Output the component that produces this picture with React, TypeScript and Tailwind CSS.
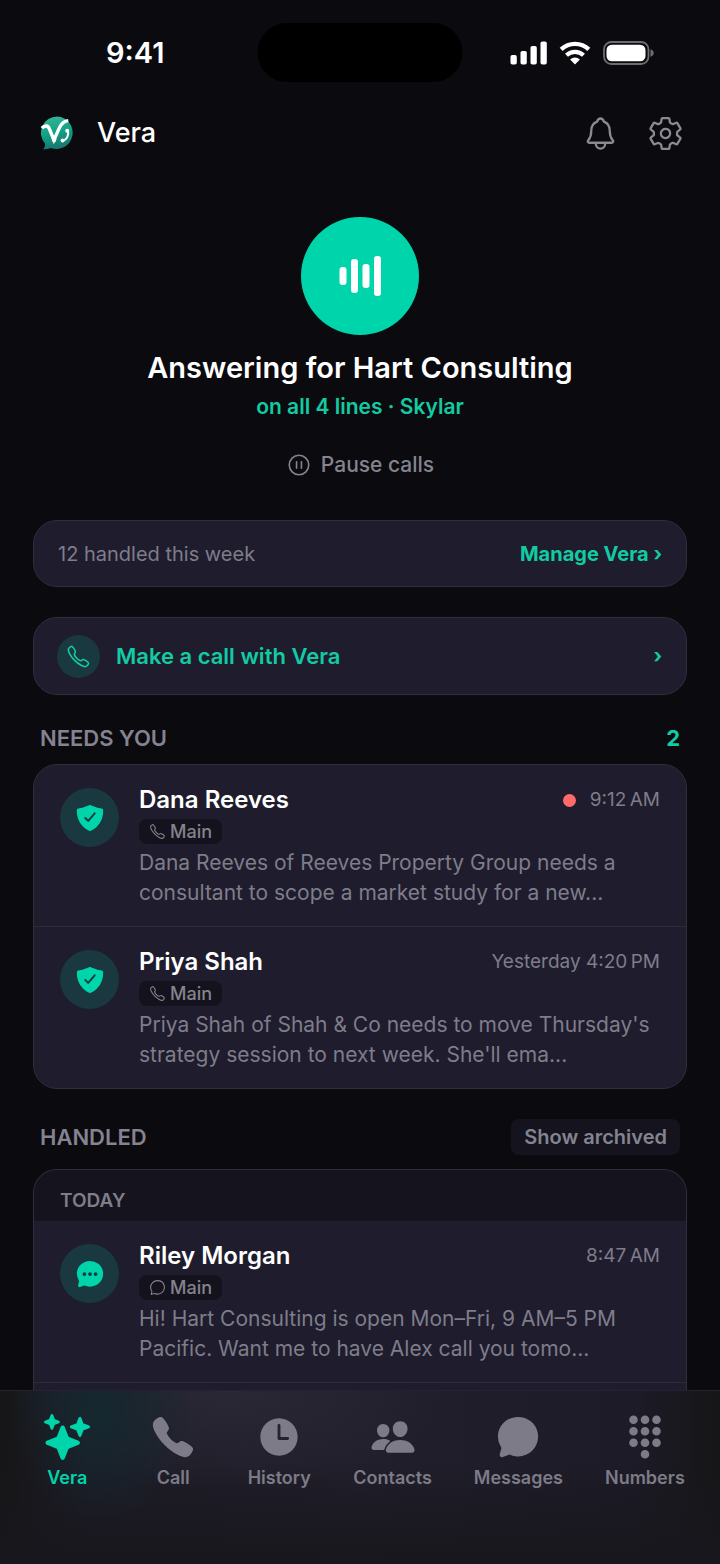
import type { ReactNode } from "react";
import type { IconType } from "react-icons";
import {
  IoCall,
  IoCallOutline,
  IoChatbubble,
  IoChatbubbleEllipses,
  IoChatbubbleOutline,
  IoKeypad,
  IoNotificationsOutline,
  IoPauseCircleOutline,
  IoPeople,
  IoSettingsOutline,
  IoShieldCheckmark,
  IoSparkles,
  IoTime,
} from "react-icons/io5";

interface Conversation {
  name: string;
  time: string;
  preview: string;
  unread?: boolean;
  icon: IconType;
  lineIcon: IconType;
}

const needsYou: Conversation[] = [
  {
    name: "Dana Reeves",
    time: "9:12\u202fAM",
    preview:
      "Dana Reeves of Reeves Property Group needs a\nconsultant to scope a market study for a new...",
    unread: true,
    icon: IoShieldCheckmark,
    lineIcon: IoCallOutline,
  },
  {
    name: "Priya Shah",
    time: "Yesterday 4:20\u202fPM",
    preview:
      "Priya Shah of Shah & Co needs to move Thursday's\nstrategy session to next week. She'll ema...",
    icon: IoShieldCheckmark,
    lineIcon: IoCallOutline,
  },
];

const handled: Conversation[] = [
  {
    name: "Riley Morgan",
    time: "8:47\u202fAM",
    preview:
      "Hi! Hart Consulting is open Mon–Fri, 9 AM–5 PM\nPacific. Want me to have Alex call you tomo...",
    icon: IoChatbubbleEllipses,
    lineIcon: IoChatbubbleOutline,
  },
];

const tabs: { label: string; icon: IconType }[] = [
  { label: "Vera", icon: IoSparkles },
  { label: "Call", icon: IoCall },
  { label: "History", icon: IoTime },
  { label: "Contacts", icon: IoPeople },
  { label: "Messages", icon: IoChatbubble },
  { label: "Numbers", icon: IoKeypad },
];

function StatusBar() {
  return (
    <div className="relative flex h-[106px] shrink-0 items-center justify-between pl-[106px] pr-[66px]">
      <span className="text-[29px] font-semibold text-white">9:41</span>
      <div className="absolute left-1/2 top-[23px] h-[59px] w-[205px] -translate-x-1/2 rounded-full bg-black" />
      <div className="flex items-center gap-3 text-white">
        <svg width="37" height="24" viewBox="0 0 37 24" fill="currentColor">
          <rect x="0.5" y="14" width="6.3" height="9.5" rx="1.8" />
          <rect x="10.5" y="10" width="6.3" height="13.5" rx="1.8" />
          <rect x="20.5" y="5" width="6.3" height="18.5" rx="1.8" />
          <rect x="30.5" y="0.5" width="6.3" height="23" rx="1.8" />
        </svg>
        <svg width="32" height="24" viewBox="0 0 32 24" fill="none">
          <path d="M2.2 8.4a20 20 0 0 1 27.6 0" stroke="currentColor" strokeWidth="4.4" />
          <path d="M7.5 14.2a12.4 12.4 0 0 1 17 0" stroke="currentColor" strokeWidth="4.2" />
          <path d="M16 23.4l-4.9-5a7 7 0 0 1 9.8 0z" fill="currentColor" />
        </svg>
        <svg width="51" height="24" viewBox="0 0 51 24" fill="none">
          <rect x="1" y="1" width="44.5" height="22" rx="7.5" stroke="#6d6d72" strokeWidth="1.8" />
          <rect x="3.5" y="3.7" width="39" height="16.6" rx="5.2" fill="currentColor" />
          <path d="M47.5 8.3c2.5.8 3.2 2.3 3.2 3.7s-.7 2.9-3.2 3.7z" fill="#6d6d72" />
        </svg>
      </div>
    </div>
  );
}

function Logo() {
  return (
    <svg width="34" height="34" viewBox="0 0 34 34" fill="none">
      <defs>
        <linearGradient id="logo" x1="12" y1="0" x2="20" y2="34" gradientUnits="userSpaceOnUse">
          <stop stopColor="#35b597" />
          <stop offset="0.5" stopColor="#12a083" />
          <stop offset="1" stopColor="#17706f" />
        </linearGradient>
      </defs>
      <path
        d="M17.3.5a16.3 16.3 0 1 1-6.5 31.6c-2.3.9-4.6 1.4-7.600 1.100 1.500-1.700 2.100-3.400 1.900-5.500A16.300 16.300 0 0 1 17.300.5z"
        fill="url(#logo)"
      />
      {/* V with its left arm running off the bubble's edge */}
      <path
        d="M1.800 12.200C4.800 9 8 9.400 9.400 12.800L13.900 24L19.600 11.400C21.700 7 24 5.100 28.300 4.600"
        stroke="#fff"
        strokeWidth="3.4"
      />
      <path d="M11.600 22.400h5l-1 3.500h-2.900z" fill="#fff" />
      {/* handset */}
      <path d="M28 15.200C29 19.600 26.600 23.600 23 24.800" stroke="#fff" strokeWidth="2" />
      <circle cx="27.200" cy="14.800" r="2" fill="#fff" />
      <circle cx="22.600" cy="24.600" r="2" fill="#fff" />
    </svg>
  );
}

function Card({ children, className = "" }: { children: ReactNode; className?: string }) {
  return (
    <div className={`overflow-hidden border border-[#302e3b] bg-[#1e1c2d] ${className}`}>
      {children}
    </div>
  );
}

function ConversationRow({ item, divided }: { item: Conversation; divided: boolean }) {
  const Icon = item.icon;
  const LineIcon = item.lineIcon;
  return (
    <li
      className={`flex gap-5 px-[26px] pb-[18px] pt-5 ${
        divided ? "border-b border-[#2d2b3a]" : ""
      }`}
    >
      <div className="mt-[3px] flex size-[59px] shrink-0 items-center justify-center rounded-full bg-[#19383f] text-[#00d4aa]">
        <Icon size={30} />
      </div>
      <div className="min-w-0 flex-1">
        <div className="flex items-center justify-between leading-[30px]">
          <h3 className="text-2xl leading-[30px] font-semibold text-white">{item.name}</h3>
          <div className="flex items-center gap-[14px]">
            {item.unread && <span className="size-[13px] rounded-full bg-[#ff6b6b]" />}
            <span className="text-[19px] text-[#7f7d8a]">{item.time}</span>
          </div>
        </div>
        <div className="mt-1 flex h-[25px] w-fit items-center gap-1 rounded-lg bg-[#14131d] px-[10px] text-[#85838f]">
          <LineIcon size={17} />
          <span className="text-lg font-medium">Main</span>
        </div>
        <p className="mt-1 whitespace-pre-line text-[21px] leading-[30px] text-[#7f7d8a]">
          {item.preview}
        </p>
      </div>
    </li>
  );
}

export default function App() {
  return (
    <div className="flex h-screen min-h-[1200px] flex-col bg-[#0a0a0f] font-[Inter,sans-serif]">
      <StatusBar />

      <header className="flex h-[54px] shrink-0 items-center justify-between pl-10 pr-9">
        <div className="flex items-center gap-[23px]">
          <Logo />
          <h1 className="text-[27px] font-medium text-white">Vera</h1>
        </div>
        <div className="flex items-center gap-7 text-[#8b8a93]">
          <button type="button" aria-label="Notifications">
            <IoNotificationsOutline size={37} />
          </button>
          <button type="button" aria-label="Settings">
            <IoSettingsOutline size={37} />
          </button>
        </div>
      </header>

      <main className="flex min-h-0 flex-1 flex-col overflow-hidden px-[33px]">
        <section className="flex shrink-0 flex-col items-center pt-[57px]">
          <div className="flex size-[118px] items-center justify-center rounded-full bg-[#00d4aa]">
            <svg width="42" height="40" viewBox="0 0 42 40" fill="#fff">
              <rect x="0.5" y="11" width="7" height="18" rx="3" />
              <rect x="12" y="3" width="7" height="34" rx="3" />
              <rect x="23.5" y="8" width="7" height="24" rx="3" />
              <rect x="35" y="0" width="7" height="40" rx="3" />
            </svg>
          </div>
          <h2 className="mt-[15px] text-[29px] leading-9 font-semibold text-white">
            Answering for Hart Consulting
          </h2>
          <p className="mt-[7px] text-[21px] leading-7 font-semibold text-[#12cba3]">
            on all 4 lines · Skylar
          </p>
          <button
            type="button"
            className="mt-[30px] flex items-center gap-[9px] text-[21px] leading-7 font-medium text-[#85838f]"
          >
            <IoPauseCircleOutline size={26} />
            Pause calls
          </button>
        </section>

        <Card className="mt-[41px] flex h-[67px] shrink-0 items-center justify-between rounded-3xl px-6">
          <span className="text-[20px] text-[#7f7d8a]">12 handled this week</span>
          <a href="#manage" className="text-[20px] font-bold text-[#12cba3]">
            Manage Vera ›
          </a>
        </Card>

        <Card className="mt-[30px] shrink-0 rounded-3xl">
          <button
            type="button"
            className="flex h-[76px] w-full items-center gap-4 pl-[23px] pr-6 text-[22px] font-semibold text-[#12cba3]"
          >
            <span className="flex size-[43px] items-center justify-center rounded-full bg-[#19383f]">
              <IoCallOutline size={25} />
            </span>
            Make a call with Vera
            <span className="ml-auto text-[20px] font-bold">›</span>
          </button>
        </Card>

        <div className="mt-[29px] flex shrink-0 items-center justify-between px-[7px] text-[22px] leading-7">
          <h2 className="font-semibold text-[#85838f]">NEEDS YOU</h2>
          <span className="font-bold text-[#12cba3]">2</span>
        </div>
        <Card className="mt-3 shrink-0 rounded-3xl">
          <ul>
            {needsYou.map((item, i) => (
              <ConversationRow key={item.name} item={item} divided={i < needsYou.length - 1} />
            ))}
          </ul>
        </Card>

        <div className="mt-[30px] flex shrink-0 items-center justify-between px-[7px]">
          <h2 className="text-[22px] leading-7 font-semibold text-[#85838f]">HANDLED</h2>
          <button
            type="button"
            className="h-9 rounded-lg bg-[#14131e] px-[13px] text-[20px] font-semibold text-[#85838f]"
          >
            Show archived
          </button>
        </div>
        <Card className="mt-[14px] flex-1 rounded-t-3xl border-b-0">
          <h3 className="flex h-[51px] items-center bg-[#14131e] px-[26px] pt-3 text-[19px] font-semibold text-[#7f7d8a]">
            TODAY
          </h3>
          <ul>
            {handled.map((item) => (
              <ConversationRow key={item.name} item={item} divided />
            ))}
          </ul>
        </Card>
      </main>

      <nav className="flex h-[174px] shrink-0 items-start justify-center border-t border-[#25232f] bg-[radial-gradient(90px_110px_at_100px_20px,#14282f,transparent),radial-gradient(220px_100px_at_230px_0px,#292834,transparent),linear-gradient(to_bottom,transparent_40%,#18171d),linear-gradient(to_right,#161617,#1d1c27_12%,#201f2b_50%,#1c1b27_88%,#161617)] pt-[23px]">
        {tabs.map(({ label, icon: Icon }) => (
          <button
            key={label}
            type="button"
            className={`flex min-w-[106px] flex-col items-center gap-2 px-[21px] ${
              label === "Vera" ? "text-[#00d4aa]" : "text-[#7d7b88]"
            }`}
          >
            <Icon size={46} />
            <span className="text-lg leading-5 font-semibold">{label}</span>
          </button>
        ))}
      </nav>
    </div>
  );
}
